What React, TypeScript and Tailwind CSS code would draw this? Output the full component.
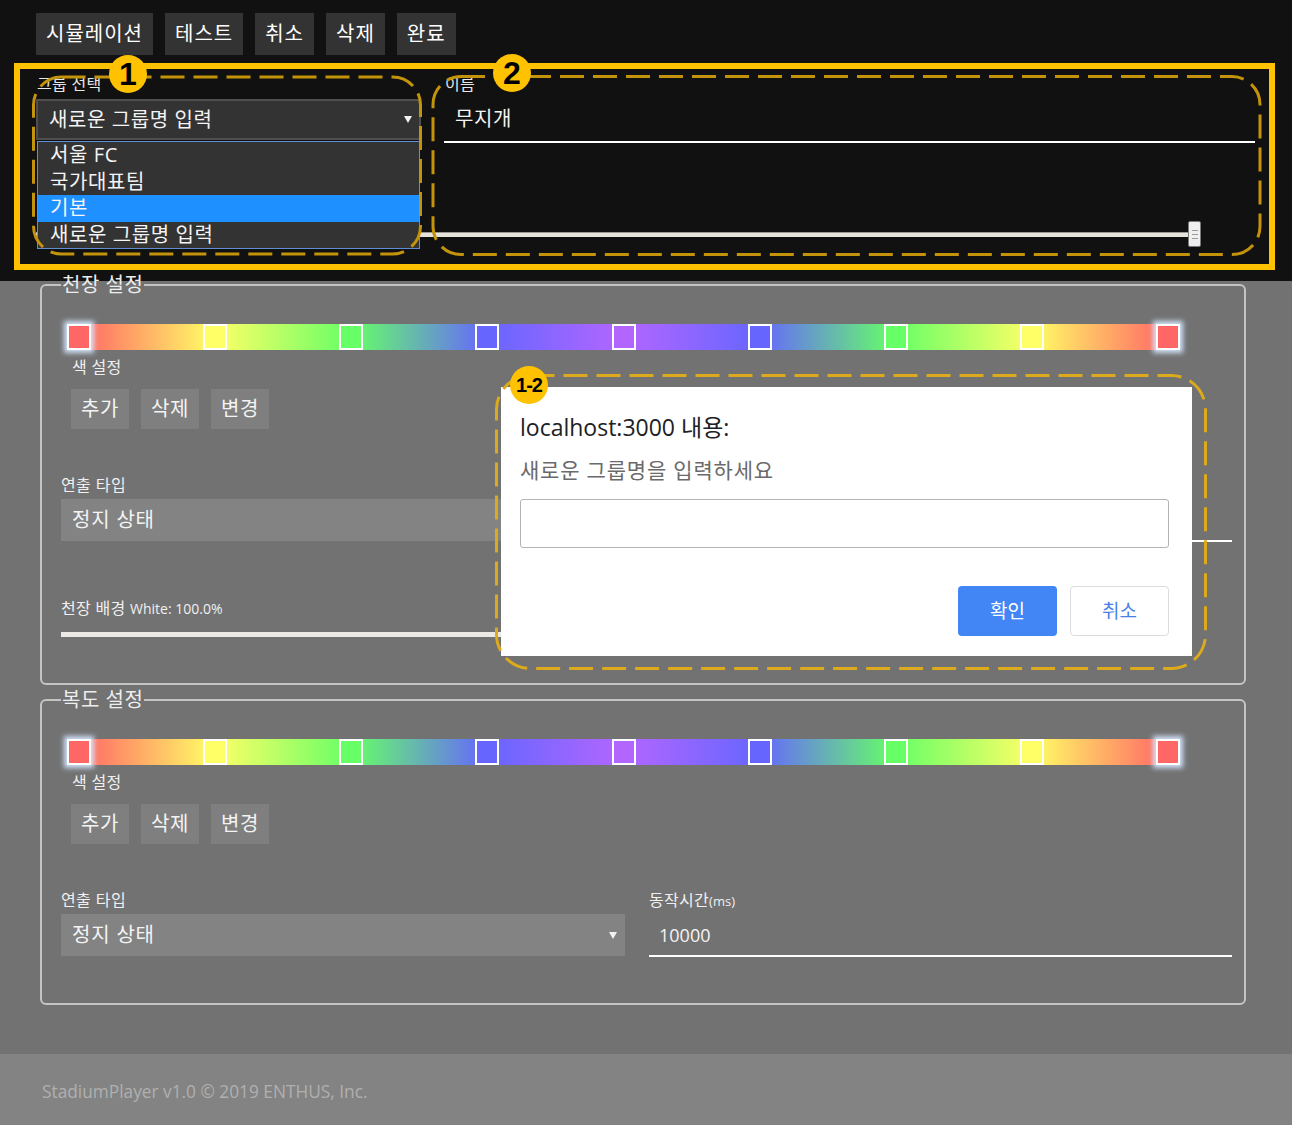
import React from "react";

const markerColors = [
  "bg-[#ff6666]",
  "bg-[#ffff66]",
  "bg-[#66ff66]",
  "bg-[#6666ff]",
  "bg-[#b366ff]",
  "bg-[#6666ff]",
  "bg-[#66ff66]",
  "bg-[#ffff66]",
  "bg-[#ff6666]",
];

function Caret() {
  return (
    <svg width="8" height="7" viewBox="0 0 8 7" className="shrink-0">
      <path d="M0 0 H8 L4 7 Z" fill="#f2f2f2" />
    </svg>
  );
}

function ColorBar() {
  return (
    <div className="relative ml-[6px] w-[1113px] h-[26px]">
      <div className="absolute inset-y-0 left-[12px] right-[12px] bg-[linear-gradient(to_right,#ff6666_0%,#ffff66_12.5%,#66ff66_25%,#6666ff_37.5%,#b366ff_50%,#6666ff_62.5%,#66ff66_75%,#ffff66_87.5%,#ff6666_100%)]" />
      <div className="relative flex h-full justify-between">
        {markerColors.map((c, i) => (
          <div
            key={i}
            className={`w-[24px] h-[26px] border-2 border-white ${c} ${
              i === 0 || i === markerColors.length - 1
                ? "shadow-[0_0_5px_3px_rgba(214,232,255,0.95)]"
                : ""
            }`}
          />
        ))}
      </div>
    </div>
  );
}

function Section({ title, withBackground }: { title: string; withBackground?: boolean }) {
  return (
    <fieldset className="border-2 border-[#c4c4c4] rounded-[6px] pl-[19px] pr-[12px] pb-[46px]">
      <legend className="px-[1px] text-[20px] leading-[24px] tracking-[0.5px] text-[#ededed]">{title}</legend>

      <div className="mt-[27px]">
        <ColorBar />
      </div>

      <div className="ml-[11px] mt-[7px] text-[16px] leading-[20px] tracking-[0.3px] text-[#f0f0f0]">색 설정</div>
      <div className="ml-[10px] mt-[12px] flex gap-[12px]">
        {["추가", "삭제", "변경"].map((b) => (
          <button
            key={b}
            className="w-[58px] h-[40px] bg-[#7f7f7f] text-[20px] tracking-[0.5px] text-[#f4f4f4] flex items-center justify-center"
          >
            {b}
          </button>
        ))}
      </div>

      <div className="mt-[46px] flex gap-[24px]">
        <div className="w-[564px]">
          <div className="text-[16px] leading-[20px] tracking-[0.4px] text-[#f0f0f0]">연출 타입</div>
          <div className="mt-[4px] h-[42px] bg-[#838383] flex items-center justify-between pl-[11px] pr-[8px]">
            <span className="text-[20px] tracking-[0.8px] text-[#f4f4f4]">정지 상태</span>
            <Caret />
          </div>
        </div>
        <div className="flex-1">
          <div className="text-[16px] leading-[20px] tracking-[0.3px] text-[#f0f0f0]">
            동작시간<span className="text-[13px] tracking-normal">(ms)</span>
          </div>
          <div className="mt-[4px] h-[42px] border-b-2 border-white flex items-center pl-[10px]">
            <span className="text-[18px] text-[#f4f4f4]">10000</span>
          </div>
        </div>
      </div>

      {withBackground && (
        <>
          <div className="mt-[56px] text-[16px] leading-[20px] tracking-[0.3px] text-[#f0f0f0]">
            천장 배경 <span className="text-[14px] tracking-normal">White: 100.0%</span>
          </div>
          <div className="mt-[13px] w-[564px] h-[5px] bg-[#ece8e4]" />
        </>
      )}
    </fieldset>
  );
}

function Annotations() {
  return (
    <svg
      width="1292"
      height="1125"
      viewBox="0 0 1292 1125"
      className="absolute left-0 top-0 pointer-events-none"
    >
      <rect x="17" y="66" width="1255" height="201" fill="none" stroke="#fec200" strokeWidth="6" />
      <rect
        x="33.5"
        y="77"
        width="387"
        height="177"
        rx="28"
        fill="none"
        stroke="#c3940b"
        strokeWidth="3"
        strokeDasharray="24 9"
      />
      <rect
        x="433"
        y="76.5"
        width="827"
        height="178"
        rx="28"
        fill="none"
        stroke="#c3940b"
        strokeWidth="3"
        strokeDasharray="24 9"
      />
      <rect
        x="496.5"
        y="375.5"
        width="709"
        height="293"
        rx="34"
        fill="none"
        stroke="#dcaa1c"
        strokeWidth="3"
        strokeDasharray="24 9"
      />
    </svg>
  );
}

function Badge({ label, className }: { label: string; className: string }) {
  return (
    <div
      className={`absolute w-[38px] h-[38px] rounded-full bg-[#fec200] flex items-center justify-center font-['Liberation_Sans',sans-serif] font-bold text-black ${className}`}
    >
      {label}
    </div>
  );
}

export default function App() {
  return (
    <div className="relative w-[1292px] min-h-[1125px] bg-[#727272] font-['Open_Sans','Noto_Sans_CJK_KR',sans-serif] overflow-hidden">
      {/* Top dark panel */}
      <header className="relative h-[281px] bg-[#111111] pt-[13px] pl-[36px]">
        <div className="flex gap-[12px]">
          {["시뮬레이션", "테스트", "취소", "삭제", "완료"].map((b) => (
            <button
              key={b}
              className="h-[42px] px-[10px] bg-[#333333] text-[20px] tracking-[1px] text-white flex items-center"
            >
              {b}
            </button>
          ))}
        </div>

        <div className="mt-[19px] flex">
          <div className="w-[385px]">
            <div className="text-[16px] leading-[20px] tracking-[0.3px] text-[#e8e8e8] pl-[1px]">그룹 선택</div>
            <div className="mt-[5px] h-[41px] border-2 border-[#4f4f4f] bg-[#333333] flex items-center justify-between pl-[11px] pr-[7px]">
              <span className="text-[20px] tracking-[0.6px] text-[#f4f4f4]">새로운 그룹명 입력</span>
              <Caret />
            </div>
          </div>
          <div className="ml-[23px] w-[811px]">
            <div className="text-[16px] leading-[20px] tracking-[0.3px] text-[#e8e8e8] pl-[1px]">이름</div>
            <div className="mt-[5px] h-[44px] border-b-2 border-white flex items-center pl-[11px] pb-[2px]">
              <span className="text-[20px] tracking-[0.6px] text-[#f4f4f4]">무지개</span>
            </div>
          </div>
        </div>

        <div className="mt-[78px] w-[1165px] h-[26px] flex items-center">
          <div className="flex-1 h-[5px] bg-[#e6e2dc] border-t border-[#9a9692]" />
          <div className="w-[13px] h-[26px] bg-[#efefef] border border-[#7a7a7a] rounded-[2px] flex flex-col items-center justify-center gap-[3px]">
            <div className="w-[6px] h-[1px] bg-[#9a9a9a]" />
            <div className="w-[6px] h-[1px] bg-[#9a9a9a]" />
            <div className="w-[6px] h-[1px] bg-[#9a9a9a]" />
          </div>
        </div>

        {/* open dropdown list */}
        <div className="absolute left-[37px] top-[141px] w-[383px] border border-[#5f8fd2] bg-[#333333] text-[20px] tracking-[0.6px] text-[#f4f4f4]">
          {["서울 FC", "국가대표팀", "기본", "새로운 그룹명 입력"].map((o) => (
            <div
              key={o}
              className={`h-[26.5px] leading-[26px] pl-[12px] ${o === "기본" ? "bg-[#1e90ff]" : ""}`}
            >
              {o}
            </div>
          ))}
        </div>
      </header>

      <main className="relative pl-[40px] pr-[46px] pb-[49px]">
        <div className="mt-[-8px]">
          <Section title="천장 설정" withBackground />
        </div>
        <div className="mt-[3px]">
          <Section title="복도 설정" />
        </div>
      </main>

      <footer className="h-[72px] bg-[#838383] flex items-center pl-[42px] pt-[4px] text-[17.3px] text-[#b0b0b0]">
        StadiumPlayer v1.0 © 2019 ENTHUS, Inc.
      </footer>

      {/* prompt dialog */}
      <div className="absolute left-[501px] top-[387px] w-[691px] h-[269px] bg-white pl-[19px] pr-[23px] pt-[25px]">
        <div className="text-[23px] leading-[30px] text-[#202124]">localhost:3000 내용:</div>
        <div className="mt-[14px] text-[21px] leading-[28px] tracking-[0.8px] text-[#6a6a6a]">새로운 그룹명을 입력하세요</div>
        <div className="mt-[15px] h-[49px] border border-[#b4b4b4] rounded-[3px]" />
        <div className="mt-[38px] flex justify-end gap-[13px]">
          <button className="w-[99px] h-[50px] rounded-[4px] bg-[#4285f4] text-[19px] text-white">확인</button>
          <button className="w-[99px] h-[50px] rounded-[4px] border border-[#dadce0] bg-white text-[19px] text-[#4a7fe6]">
            취소
          </button>
        </div>
      </div>

      <Annotations />
      <Badge label="1" className="left-[109px] top-[55px] text-[32px]" />
      <Badge label="2" className="left-[493px] top-[54px] text-[32px]" />
      <Badge label="1-2" className="left-[510px] top-[366px] text-[20px] tracking-[-1px]" />
    </div>
  );
}
